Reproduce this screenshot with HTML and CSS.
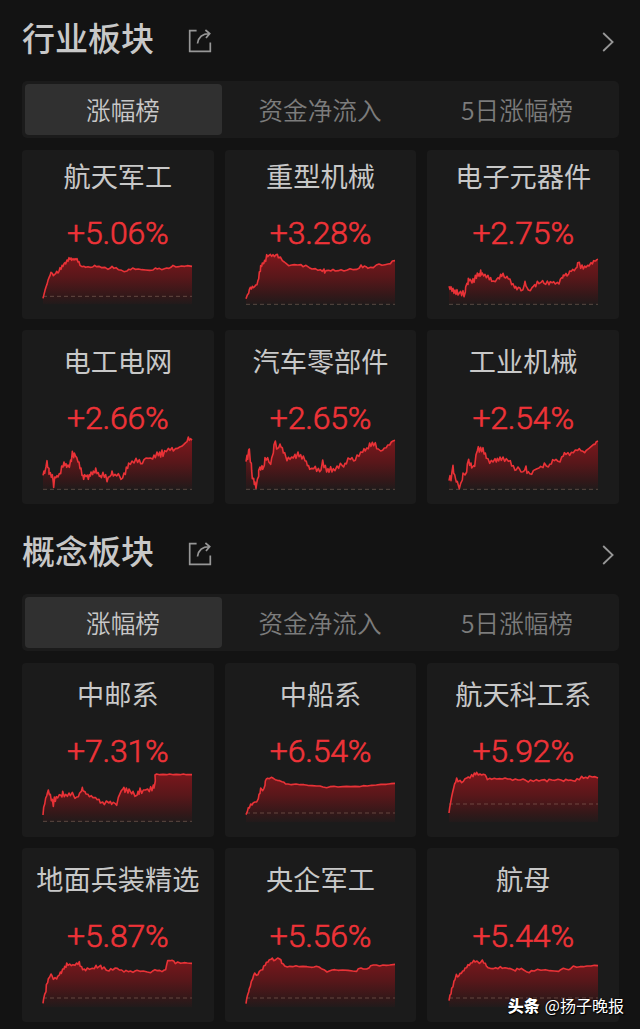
FILE: index.html
```
<!DOCTYPE html>
<html lang="zh-CN">
<head>
<meta charset="UTF-8">
<meta name="viewport" content="width=device-width, initial-scale=1.0">
<title>板块行情</title>
<link rel="stylesheet" href="styles.css">
</head>
<body>

<section class="board">
  <div class="board-header">
    <h2>行业板块</h2>
    <svg class="share" viewBox="0 0 24 24"><path d="M8.6 1.7H1.7V22.3H22.3V13.5M9.5 14.5C10.3 9 14 4.6 21.3 4.6M17.4 1L21.7 4.6L18 9"/></svg>
    <svg class="arrow" viewBox="0 0 12 20"><path d="M1.2 1L10.6 10L1.2 19"/></svg>
  </div>
  <div class="tabs">
    <div class="tab active">涨幅榜</div>
    <div class="tab">资金净流入</div>
    <div class="tab">5日涨幅榜</div>
  </div>
  <div class="cards cut" id="industry"></div>
</section>

<section class="board">
  <div class="board-header">
    <h2>概念板块</h2>
    <svg class="share" viewBox="0 0 24 24"><path d="M8.6 1.7H1.7V22.3H22.3V13.5M9.5 14.5C10.3 9 14 4.6 21.3 4.6M17.4 1L21.7 4.6L18 9"/></svg>
    <svg class="arrow" viewBox="0 0 12 20"><path d="M1.2 1L10.6 10L1.2 19"/></svg>
  </div>
  <div class="tabs">
    <div class="tab active">涨幅榜</div>
    <div class="tab">资金净流入</div>
    <div class="tab">5日涨幅榜</div>
  </div>
  <div class="cards" id="concept"></div>
</section>

<div class="watermark"><b>头条</b><span>@扬子晚报</span></div>

<script src="script.js"></script>
</body>
</html>
```
FILE: styles.css
```
body {
  position: relative;
  width: 597px;
  height: 1029px;
  margin: 0;
  padding: 0 21px 0 22px;
  overflow: hidden;
  background: #131313;
  color: #c8c8c8;
  font-family: "Noto Sans CJK SC", sans-serif;
}

.board + .board {
  padding-top: 9px;
}

.board-header {
  display: flex;
  align-items: center;
  height: 76px;
  margin-bottom: 5px;
}

.board-header h2 {
  margin: 0 0 3px;
  font-size: 33px;
  line-height: 48px;
  font-weight: 500;
}

.board-header svg {
  fill: none;
  stroke: #979797;
}

.share {
  width: 24px;
  height: 24px;
  margin: 6px 0 0 34px;
  stroke-width: 1.7;
}

.arrow {
  width: 12px;
  height: 20px;
  margin: 7px 5px 0 auto;
  stroke-width: 1.8;
}

.tabs {
  display: grid;
  grid-template-columns: repeat(3, 1fr);
  box-sizing: border-box;
  height: 57px;
  margin-bottom: 12px;
  padding: 3px;
  border-radius: 5px;
  background: #1b1b1b;
}

.tab {
  border-radius: 4px;
  color: #7c7c7c;
  font-size: 24.6px;
  line-height: 51px;
  font-weight: 350;
  text-align: center;
  text-indent: -1px;
}

.tab.active {
  background: #303030;
  color: #c8c8c8;
}

.cards {
  display: grid;
  grid-template-columns: repeat(3, 1fr);
  grid-auto-rows: 174px;
  gap: 11px;
}

/* the first row is slightly scrolled under the tabs */
.cards.cut {
  grid-template-rows: 169px;
}

.card {
  display: flex;
  flex-direction: column;
  justify-content: flex-end;
  align-items: center;
  border-radius: 4px;
  background: #1b1b1b;
}

.name {
  font-size: 27.2px;
  line-height: 40px;
  font-weight: 400;
}

.rate {
  margin-top: 18px;
  color: #ee3338;
  font-family: Roboto, sans-serif;
  font-size: 32px;
  line-height: 40px;
  font-weight: 300;
  letter-spacing: -0.2px;
  -webkit-text-stroke: 0.6px #ee3338;
}

.chart {
  width: 151px;
  height: 58px;
  margin: -2px 0 10px;
}

.chart .line {
  fill: none;
  stroke: #e93237;
  stroke-width: 4.8;
  stroke-linejoin: round;
}

.chart .base {
  stroke: #a08070;
  stroke-opacity: 0.45;
  stroke-width: 3;
  stroke-dasharray: 12 9;
}

.watermark {
  position: absolute;
  right: 16px;
  bottom: 12px;
  display: flex;
  gap: 5px;
  color: #fff;
  font-size: 16px;
  line-height: 24px;
  text-shadow: 0 0 2px #000, 1px 1px 1px #000;
}

.watermark b {
  font-weight: 900;
}
```
FILE: script.js
```
// points: x,y pairs on a 447 x 170 grid, base: y of the previous close line
const industry = [
  { name: "航天军工", rate: "+5.06%", base: 136,
    points: "0,142 3,130 6,118 9,108 12,100 15,88 18,80 21,74 24,64 28,67 31,74 35,70 38,68 41,61 45,66 48,61 51,50 54,55 57,43 60,46 63,38 66,35 68,39 72,27 75,31 78,20 81,25 84,21 86,28 90,23 93,27 96,23 99,26 102,23 105,33 108,32 111,43 117,47 122,46 128,49 135,47 141,49 149,48 155,43 160,47 168,46 176,50 186,49 195,55 201,52 207,46 213,52 219,50 226,56 236,58 243,62 252,60 257,55 263,56 269,51 277,55 286,54 297,56 308,57 320,58 330,57 337,51 343,54 349,52 356,56 364,53 371,51 378,52 385,48 390,43 399,48 407,47 415,45 425,46 433,44 447,46" },
  { name: "重型机械", rate: "+3.28%", base: 160,
    points: "0,143 4,132 8,127 10,116 13,109 16,114 19,106 22,110 26,107 29,102 33,101 36,88 38,84 40,63 43,61 44,44 47,46 49,36 53,38 56,28 59,31 62,11 65,17 68,14 73,10 77,16 81,11 85,17 89,12 94,10 97,20 103,18 109,29 115,33 121,38 128,44 137,42 145,41 155,42 165,41 171,47 180,43 190,50 198,54 208,53 216,58 223,56 229,61 234,54 236,66 240,59 248,58 254,60 261,55 268,60 277,59 285,56 294,60 304,57 312,53 322,56 333,55 340,51 345,42 350,50 355,45 360,47 366,52 374,49 382,50 391,42 399,39 408,43 417,41 426,39 433,38 439,30 447,29" },
  { name: "电子元器件", rate: "+2.75%", base: 160,
    points: "0,106 3,115 6,107 9,121 12,112 15,127 18,117 21,130 24,116 27,132 31,126 35,121 38,134 42,119 45,137 49,123 50,108 54,97 57,100 58,82 61,89 64,85 69,96 72,83 75,94 79,73 82,82 85,66 88,75 91,68 93,76 95,57 97,72 100,66 104,75 108,70 112,80 117,73 121,86 125,80 128,91 134,90 139,92 143,85 147,80 151,84 155,70 158,76 162,67 166,79 170,81 174,76 178,84 183,84 188,101 192,98 197,111 200,106 204,116 208,109 213,111 216,119 222,116 226,101 228,91 231,105 234,110 238,117 244,119 249,110 253,106 257,101 260,107 265,91 270,98 276,94 281,89 285,97 290,100 295,90 300,101 304,92 310,95 314,92 319,99 325,94 330,99 334,85 338,80 341,81 343,72 347,74 351,67 354,75 359,69 362,60 367,61 371,55 376,59 380,52 384,49 386,35 391,34 395,52 399,42 403,54 407,45 411,49 416,43 420,45 426,35 430,39 434,29 440,30 443,26 447,25" },
  { name: "电工电网", rate: "+2.66%", base: 160,
    points: "0,118 3,105 5,112 9,92 12,74 14,94 18,97 18,115 22,110 25,124 28,116 31,141 32,154 35,123 39,125 42,119 45,123 49,113 53,113 56,90 60,93 63,78 65,89 69,83 71,94 75,87 79,94 83,72 85,76 88,46 92,65 94,51 98,61 101,64 105,78 108,78 111,98 114,96 117,118 120,118 122,130 125,116 129,122 133,117 136,130 139,116 142,120 144,108 149,116 151,105 156,111 158,96 162,113 166,110 169,121 172,119 175,125 180,109 184,124 188,116 192,137 196,123 200,122 205,116 207,105 211,120 216,115 221,120 226,113 230,121 234,130 239,126 243,111 247,115 250,93 254,97 257,81 262,85 267,75 273,81 279,67 284,79 289,71 293,83 298,83 303,71 309,66 316,67 322,66 329,69 333,57 337,65 342,48 346,59 350,48 353,63 357,42 360,61 365,44 370,47 376,37 381,43 387,35 391,45 397,38 404,37 410,33 416,31 422,26 428,20 432,17 436,3 439,13 443,8 447,13" },
  { name: "汽车零部件", rate: "+2.65%", base: 160,
    points: "0,77 3,58 5,70 8,42 10,39 13,78 16,82 17,104 19,128 23,127 25,145 27,138 30,157 34,130 38,121 38,103 42,93 44,102 48,89 50,100 55,88 57,65 61,72 65,65 69,79 74,85 77,66 82,51 84,26 88,15 92,39 98,35 102,24 105,33 109,35 112,51 116,50 119,61 123,74 127,64 132,70 137,63 142,66 147,55 150,67 156,48 159,62 164,56 168,69 172,60 177,74 181,76 184,89 188,89 191,100 196,97 203,98 208,91 212,106 217,97 221,107 225,102 228,85 230,72 234,95 238,88 242,108 246,98 249,109 254,92 258,108 262,98 267,104 273,90 278,97 283,82 288,88 293,93 297,82 301,84 306,66 313,70 318,65 323,75 328,73 333,57 339,61 344,48 350,49 354,38 358,45 362,36 367,38 371,21 375,31 379,19 383,29 388,20 392,38 397,39 404,45 410,43 415,36 421,35 425,27 431,27 436,18 441,15 447,13" },
  { name: "工业机械", rate: "+2.54%", base: 160,
    points: "0,134 3,119 6,134 9,107 12,88 14,112 17,116 20,130 22,138 25,136 28,148 31,158 35,142 40,132 42,111 48,117 53,108 55,84 59,70 62,88 66,81 68,96 74,89 77,91 81,56 85,44 88,32 91,48 95,34 98,47 102,35 105,54 109,51 112,67 117,68 122,82 127,73 132,78 138,68 142,78 145,67 149,75 153,63 157,73 162,63 167,76 172,68 178,76 184,74 188,90 193,89 198,103 202,101 207,93 211,98 216,108 222,107 227,103 231,90 234,112 238,107 242,113 248,115 253,104 258,101 264,98 270,96 275,91 282,95 286,81 292,90 298,93 302,85 307,84 311,71 316,74 321,70 327,76 333,78 338,63 343,60 346,50 351,55 357,50 362,58 367,49 373,50 379,42 386,43 391,38 396,44 402,46 407,50 412,43 420,37 427,31 434,25 438,25 442,17 447,15" }
];

const concept = [
  { name: "中邮系", rate: "+7.31%", base: 157,
    points: "0,138 2,115 5,106 8,87 11,81 13,73 16,63 19,77 22,76 25,95 28,91 31,112 34,84 37,97 40,83 44,87 49,77 54,79 57,84 59,67 64,83 68,76 73,82 78,72 82,80 88,70 92,80 96,88 101,84 106,83 110,72 115,67 118,55 120,65 126,68 129,75 135,76 139,83 145,80 150,86 158,86 162,92 168,91 172,102 179,99 184,107 190,96 198,102 202,97 206,106 211,100 217,104 221,109 226,85 231,74 235,65 240,59 243,55 246,70 250,57 255,72 258,60 262,67 266,75 270,67 276,82 282,79 285,67 288,76 291,57 296,73 301,63 307,63 314,60 319,68 323,53 327,65 331,48 333,57 337,36 336,18 341,15 350,17 360,16 371,17 380,15 391,17 400,16 411,17 421,15 430,17 447,17" },
  { name: "中船系", rate: "+6.54%", base: 132,
    points: "0,137 4,128 7,116 10,117 14,105 18,108 22,101 27,99 32,99 37,89 39,76 42,73 44,57 50,65 54,58 57,49 58,36 61,30 65,28 70,29 76,25 82,28 88,32 94,34 101,35 108,38 114,40 119,45 126,45 136,47 150,45 162,47 174,47 185,49 199,50 211,51 222,51 231,54 242,56 252,53 264,52 276,54 290,53 302,52 314,53 327,52 340,53 352,50 364,51 377,49 391,48 405,46 421,46 434,44 447,43" },
  { name: "航天科工系", rate: "+5.92%", base: 105,
    points: "0,132 2,116 5,100 8,83 11,69 14,57 17,44 20,40 23,27 27,38 33,34 38,41 43,37 48,29 53,27 58,24 63,27 68,17 72,23 76,12 80,17 83,10 88,18 93,15 98,18 103,16 108,17 112,24 115,32 122,28 128,31 136,28 143,30 152,29 160,30 168,27 176,30 184,30 191,34 199,30 207,33 214,33 222,30 230,34 238,39 244,33 253,37 262,32 270,36 278,33 287,32 294,38 300,31 309,33 318,34 327,31 336,33 344,37 350,31 357,34 365,33 372,35 378,37 384,29 391,32 398,22 403,28 410,25 416,28 421,21 430,24 438,23 447,27" },
  { name: "地面兵装精选", rate: "+5.87%", base: 132,
    points: "0,148 2,134 5,121 9,113 10,92 14,86 16,74 20,69 24,60 27,65 31,76 36,71 41,75 44,67 49,63 52,54 55,58 59,45 63,45 65,37 69,40 71,27 75,34 80,30 85,35 90,32 96,34 101,27 105,31 109,23 111,36 116,38 119,47 124,45 128,50 133,42 140,46 148,43 154,44 159,34 163,42 169,37 173,34 177,45 183,39 190,49 198,51 203,44 209,48 217,42 223,43 229,48 236,48 243,54 249,49 256,53 262,51 270,55 276,51 282,49 291,52 301,51 313,54 323,56 329,51 336,47 343,50 350,49 357,53 364,48 368,47 371,32 374,20 381,20 387,19 393,22 397,29 404,24 413,28 423,26 433,27 447,28" },
  { name: "央企军工", rate: "+5.56%", base: 132,
    points: "0,149 2,135 5,122 8,114 10,104 13,97 16,82 20,75 23,64 26,57 31,64 36,62 40,52 45,48 50,47 53,36 58,34 61,25 66,24 70,17 75,16 79,12 83,20 89,17 95,12 101,15 105,18 107,28 112,30 116,36 124,39 131,37 140,38 150,35 160,38 171,37 183,38 196,40 204,39 211,37 219,39 226,44 234,47 243,54 250,51 258,48 266,47 276,49 290,48 306,49 320,51 332,52 337,44 345,42 352,45 362,45 370,41 374,35 382,33 391,33 401,36 411,33 421,34 431,33 447,31" },
  { name: "航母", rate: "+5.44%", base: 132,
    points: "0,140 3,123 6,120 8,103 12,98 15,81 18,77 22,61 26,69 30,65 33,58 37,58 41,51 45,50 48,42 53,41 57,32 61,34 65,27 70,26 74,19 78,24 84,21 91,28 95,25 100,18 104,27 109,28 112,36 117,41 124,43 132,44 140,41 147,44 154,38 160,43 168,41 176,43 185,44 192,47 199,51 204,43 211,47 217,43 224,48 232,53 241,56 247,50 256,51 265,46 276,49 289,47 302,50 316,51 329,52 335,47 343,43 350,45 359,47 365,44 373,36 383,40 393,38 403,38 414,36 426,36 436,34 447,35" }
];

function renderCards(id, list) {
  const box = document.getElementById(id);

  list.forEach((item, index) => {
    const card = document.createElement("div");
    const fill = id + "-fill" + index;
    card.classList.add("card");
    card.innerHTML = `
      <div class="name">${item.name}</div>
      <div class="rate">${item.rate}</div>
      <svg class="chart" viewBox="-3 0 453 174">
        <defs>
          <linearGradient id="${fill}" gradientUnits="userSpaceOnUse" x1="0" y1="10" x2="0" y2="164">
            <stop offset="0" stop-color="#7c171c"/>
            <stop offset="0.45" stop-color="#59171a"/>
            <stop offset="0.8" stop-color="#331819"/>
            <stop offset="1" stop-color="#1e1b1b"/>
          </linearGradient>
        </defs>
        <polygon points="0,160 ${item.points} 447,160" fill="url(#${fill})"/>
        <line class="base" x1="0" y1="${item.base}" x2="447" y2="${item.base}"/>
        <polyline class="line" points="${item.points}"/>
      </svg>
    `;
    box.appendChild(card);
  });
}

renderCards("industry", industry);
renderCards("concept", concept);
```
